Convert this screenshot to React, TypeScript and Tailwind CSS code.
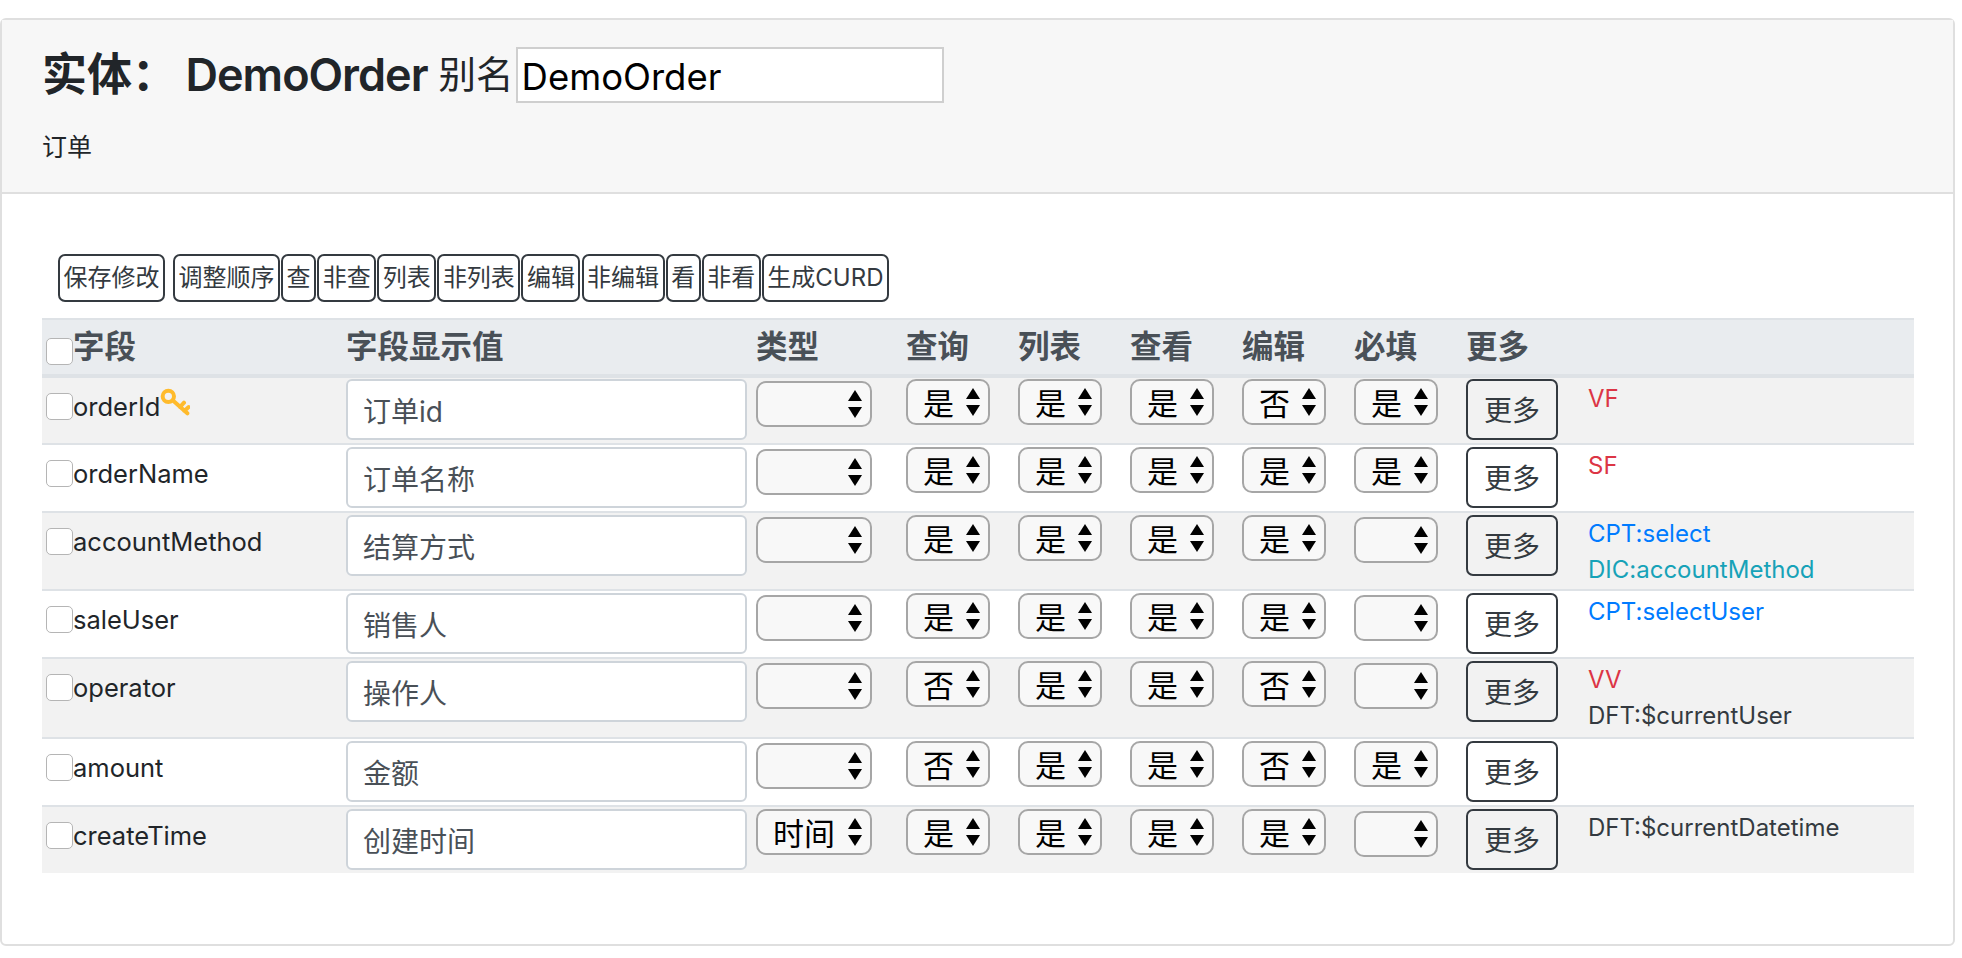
const FONT = "font-['Inter','Noto_Sans_CJK_SC',sans-serif]";

type Row = {
  name: string;
  label: string;
  type?: string;
  query: string;
  list: string;
  view: string;
  edit: string;
  required: string;
  notes: { text: string; color: string }[];
  hasKey?: boolean;
  height: string;
};

const rows: Row[] = [
  { name: "orderId", label: "订单id", query: "是", list: "是", view: "是", edit: "否", required: "是", notes: [{ text: "VF", color: "text-[#dc3545]" }], hasKey: true, height: "h-[68px]" },
  { name: "orderName", label: "订单名称", query: "是", list: "是", view: "是", edit: "是", required: "是", notes: [{ text: "SF", color: "text-[#dc3545]" }], height: "h-[68px]" },
  { name: "accountMethod", label: "结算方式", query: "是", list: "是", view: "是", edit: "是", required: "", notes: [{ text: "CPT:select", color: "text-[#007bff]" }, { text: "DIC:accountMethod", color: "text-[#17a2b8]" }], height: "h-[78px]" },
  { name: "saleUser", label: "销售人", query: "是", list: "是", view: "是", edit: "是", required: "", notes: [{ text: "CPT:selectUser", color: "text-[#007bff]" }], height: "h-[68px]" },
  { name: "operator", label: "操作人", query: "否", list: "是", view: "是", edit: "否", required: "", notes: [{ text: "VV", color: "text-[#dc3545]" }, { text: "DFT:$currentUser", color: "text-[#343a40]" }], height: "h-[80px]" },
  { name: "amount", label: "金额", query: "否", list: "是", view: "是", edit: "否", required: "是", notes: [], height: "h-[68px]" },
  { name: "createTime", label: "创建时间", type: "时间", query: "是", list: "是", view: "是", edit: "是", required: "", notes: [{ text: "DFT:$currentDatetime", color: "text-[#343a40]" }], height: "h-[67px]" },
];

const toolbar = ["调整顺序", "查", "非查", "列表", "非列表", "编辑", "非编辑", "看", "非看", "生成CURD"];
const heads = ["查询", "列表", "查看", "编辑", "必填", "更多"];

function Arrows() {
  return (
    <svg className="absolute right-[10px] top-[9px] w-[14px] h-[28px] pointer-events-none" viewBox="0 0 14 28" fill="#000">
      <path d="M7 0 14 11H0Z" />
      <path d="M7 28 0 17H14Z" />
    </svg>
  );
}

function Pick({ value, wide }: { value: string; wide?: boolean }) {
  return (
    <div className={`relative ${wide ? "w-[116px]" : "w-[84px]"} ${value ? "h-[46px]" : "h-[46px] mt-[2px]"}`}>
      <select
        defaultValue={value}
        className="appearance-none block w-full h-full rounded-[10px] border-2 border-[#a6a6a6] bg-[#f8f8f8] pl-[15px] pt-[2px] text-[31px] leading-none text-black"
      >
        <option value={value}>{value}</option>
      </select>
      <Arrows />
    </div>
  );
}

function Check({ className = "" }: { className?: string }) {
  return <input type="checkbox" className={`appearance-none w-[27px] h-[27px] rounded-[5px] border border-[#b5b5b5] bg-white shrink-0 ${className}`} />;
}

function KeyIcon() {
  return (
    <svg className="w-[30px] h-[28px] -mt-[9px]" viewBox="0 0 90 84" fill="none" stroke="#ffbb2c" strokeWidth="12" strokeLinecap="round">
      <circle cx="25" cy="25" r="17" />
      <path d="M38 37 82 76M60 57l12-13M73 69l13-12" />
    </svg>
  );
}

function MoreBtn() {
  return (
    <button className="w-[92px] h-[61px] rounded-[7px] border-2 border-[#343a40] pt-[3px] text-[28px] text-[#343a40] leading-none">
      更多
    </button>
  );
}

export default function App() {
  return (
    <div className={`${FONT} bg-white h-[958px] pt-[18px] pr-[7px] text-[#212529]`}>
      <div className="h-[928px] border-2 border-[#dfdfdf] rounded-[6px]">
        <div className="h-[174px] bg-[#f7f7f7] border-b-2 border-[#dfdfdf] px-[40px] pt-[27px]">
          <div className="flex items-center h-[56px]">
            <span className="text-[45px] font-semibold">实体：</span>
            <span className="text-[45px] font-semibold tracking-[-1px] ml-[8.5px] mr-[11px]">DemoOrder</span>
            <span className="text-[37.5px] leading-none mr-[2px]">别名</span>
            <input
              defaultValue="DemoOrder"
              className="w-[428px] h-[56px] border-2 border-[#cfcfcf] bg-white px-[4px] pt-[3px] text-[36.5px] text-black outline-none"
            />
          </div>
          <p className="text-[25px] mt-[26px] leading-[36px]">订单</p>
        </div>
        <div className="px-[40px] pt-[60px]">
          <div className="flex ml-[16px] h-[48px]">
            <button className="rounded-[7px] border-2 border-[#343a40] px-[3.5px] text-[24px] text-[#343a40] mr-[8px]">保存修改</button>
            {toolbar.map((t) => (
              <button key={t} className="rounded-[7px] border-2 border-[#343a40] px-[3.5px] text-[24px] text-[#343a40] mr-[1.1px]">
                {t}
              </button>
            ))}
          </div>
          <table className="mt-[16px] w-[1872px] table-fixed border-collapse">
            <colgroup>
              <col className="w-[304px]" />
              <col className="w-[410px]" />
              <col className="w-[150px]" />
              <col className="w-[112px]" />
              <col className="w-[112px]" />
              <col className="w-[112px]" />
              <col className="w-[112px]" />
              <col className="w-[112px]" />
              <col className="w-[122px]" />
              <col />
            </colgroup>
            <thead>
              <tr className="bg-[#e9ecef] h-[57px] border-b-4 border-[#dee2e6] border-t-2 text-[31.5px] font-semibold text-[#495057] text-left">
                <th className="pl-[4px] font-semibold">
                  <div className="flex items-center">
                    <Check className="mt-[8px]" />
                    <span>字段</span>
                  </div>
                </th>
                <th className="font-semibold">字段显示值</th>
                <th className="font-semibold">类型</th>
                {heads.map((h) => (
                  <th key={h} className="font-semibold">{h}</th>
                ))}
                <th />
              </tr>
            </thead>
            <tbody>
              {rows.map((r, i) => {
                const pad = i === 0 ? "pt-[1px]" : "pt-[2px]";
                return (
                  <tr key={r.name} className={`border-b-2 border-[#dee2e6] last:border-b-0 align-top ${i % 2 === 0 ? "bg-[#f2f2f2]" : "bg-white"} ${r.height}`}>
                    <td className="pl-[4px] pt-[15px]">
                      <div className="flex items-center text-[25.5px] text-[#212529] leading-[27px]">
                        <Check />
                        <span>{r.name}</span>
                        {r.hasKey && <KeyIcon />}
                      </div>
                    </td>
                    <td className={pad}>
                      <input
                        defaultValue={r.label}
                        className="block w-[401px] h-[61px] rounded-[6px] border-2 border-[#ced4da] bg-white px-[15px] text-[28px] text-[#495057] outline-none"
                      />
                    </td>
                    <td className={pad}>
                      <Pick value={r.type ?? ""} wide />
                    </td>
                    <td className={pad}><Pick value={r.query} /></td>
                    <td className={pad}><Pick value={r.list} /></td>
                    <td className={pad}><Pick value={r.view} /></td>
                    <td className={pad}><Pick value={r.edit} /></td>
                    <td className={pad}><Pick value={r.required} /></td>
                    <td className={pad}><MoreBtn /></td>
                    <td className="pt-[3px] text-[24px] leading-[36px]">
                      {r.notes.map((n) => (
                        <div key={n.text} className={n.color}>{n.text}</div>
                      ))}
                    </td>
                  </tr>
                );
              })}
            </tbody>
          </table>
        </div>
      </div>
    </div>
  );
}
